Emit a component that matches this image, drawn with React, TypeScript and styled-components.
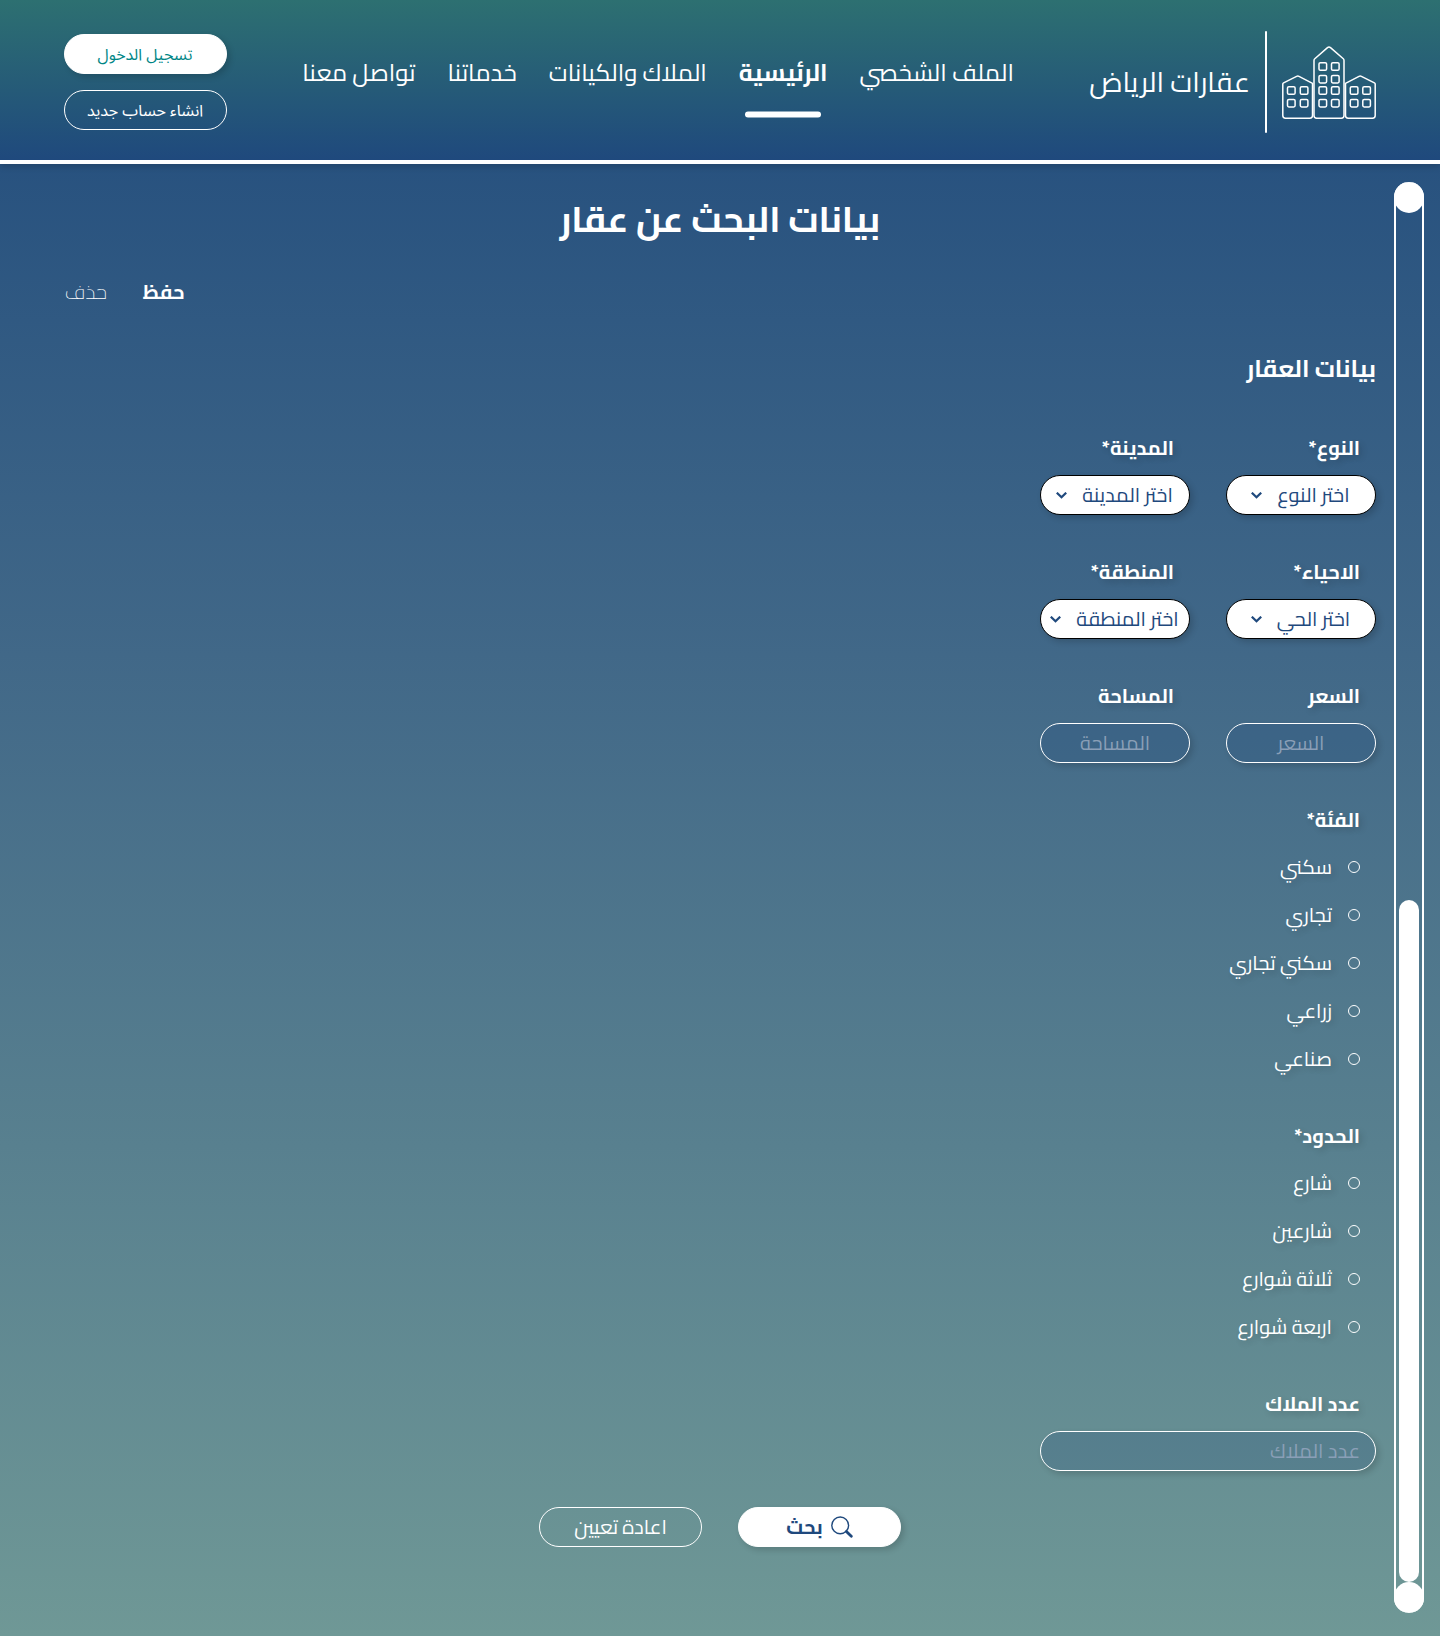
import React from 'react';
import styled, { createGlobalStyle } from 'styled-components';

const NAVY = '#1f497d';
const SOFT_SHADOW = '3px 3px 6px rgba(0, 0, 0, 0.16)';

const GlobalStyle = createGlobalStyle`
  * { box-sizing: border-box; }
  body {
    margin: 0;
    font-family: Cairo, 'DejaVu Sans', sans-serif;
    color: #fff;
  }
  button { font-family: inherit; cursor: pointer; }
`;

const Page = styled.div`
  width: 1440px;
  min-height: 1636px;
  background: linear-gradient(180deg, #1f497d 0%, #28527f 10%, #416888 40%, #6f9896 100%);
`;

/* ---------- header ---------- */

const Header = styled.header`
  display: flex;
  justify-content: space-between;
  align-items: flex-start;
  height: 164px;
  padding: 0 64px;
  border-bottom: 4px solid #fff;
  background: linear-gradient(180deg, #2d7071 0, #1f497d 160px);
  box-shadow: 0 3px 6px rgba(0, 0, 0, 0.16);
`;

const Brand = styled.div`
  display: flex;
  align-items: center;
  padding-top: 31px;
`;

const Divider = styled.span`
  width: 2px;
  height: 102px;
  margin: 0 15px;
  border-radius: 1px;
  background: #fff;
`;

const BrandName = styled.span`
  font-size: 28px;
  line-height: 40px;
`;

const Nav = styled.nav`
  display: flex;
  gap: 32px;
  padding-top: 52px;
  transform: translateY(0.5px);
`;

const NavItem = styled.a<{ $active?: boolean }>`
  display: flex;
  flex-direction: column;
  align-items: center;
  font-size: 24px;
  line-height: 40px;
  font-weight: ${(p) => (p.$active ? 700 : 400)};
`;

const Underline = styled.span`
  width: 76px;
  height: 6px;
  margin-top: 19px;
  border-radius: 3px;
  background: #fff;
`;

const Auth = styled.div`
  display: flex;
  flex-direction: column;
  gap: 16px;
  padding-top: 34px;
`;

const Pill = styled.button<{ $solid?: boolean; $bold?: boolean; $tone?: string }>`
  display: flex;
  align-items: center;
  justify-content: center;
  gap: 8px;
  width: 163px;
  height: 40px;
  padding: 0;
  border: 1px solid #fff;
  border-radius: 20px;
  font-size: 20px;
  line-height: 36px;
  font-weight: ${(p) => (p.$bold ? 700 : 400)};
  color: ${(p) => p.$tone ?? '#fff'};
  background: ${(p) => (p.$solid ? '#fff' : 'transparent')};
  box-shadow: ${(p) => (p.$solid ? SOFT_SHADOW : 'none')};
`;

const AuthPill = styled(Pill)`
  padding: 1px 1px 0 0;
  font-family: 'Noto Sans Arabic', 'Noto Sans', 'Open Sans', sans-serif;
  font-size: 16px;
`;

/* ---------- body ---------- */

const Body = styled.div`
  display: flex;
  gap: 18px;
  padding: 0 16px 23px 64px;
`;

const Rail = styled.div`
  display: flex;
  flex-direction: column;
  align-items: center;
  width: 30px;
  height: 1431px;
  margin-top: 18px;
  border: solid #fff;
  border-width: 0 2px;
  border-radius: 15px;
`;

const Knob = styled.span`
  flex: none;
  width: 30px;
  height: 31px;
  border-radius: 15px;
  background: #fff;
`;

const Thumb = styled.span`
  width: 20px;
  height: 682px;
  margin-top: auto;
  border-radius: 10px;
  background: #fff;
`;

const Main = styled.main`
  flex: 1;
  padding-top: 25px;
`;

const Title = styled.h1`
  margin: 0;
  font-size: 36px;
  line-height: 60px;
  font-weight: 700;
  text-align: center;
`;

const Actions = styled.div`
  display: flex;
  justify-content: flex-end;
  gap: 36px;
  padding: 28px 0 0 1px;
  font-size: 20px;
  line-height: 30px;
`;

const Action = styled.a<{ $bold?: boolean }>`
  font-weight: ${(p) => (p.$bold ? 700 : 200)};
`;

const SectionTitle = styled.h2`
  margin: 43px 0 45px;
  font-size: 24px;
  line-height: 38px;
  font-weight: 700;
`;

const Grid = styled.div`
  display: grid;
  grid-template-columns: 150px 150px;
  gap: 42px 36px;
`;

const Field = styled.div<{ $top?: number }>`
  display: flex;
  flex-direction: column;
  gap: 12px;
  margin-top: ${(p) => p.$top ?? 0}px;
`;

const Label = styled.div`
  height: 30px;
  padding-right: 16px;
  font-size: 20px;
  line-height: 29px;
  font-weight: 700;
  text-shadow: ${SOFT_SHADOW};
  transform: translateY(-0.4px);
`;

const Select = styled.button`
  display: flex;
  align-items: center;
  justify-content: center;
  gap: 15px;
  height: 40px;
  padding: 0 1px 0 0;
  border: 1px solid #000;
  border-radius: 20px;
  font-size: 20px;
  line-height: 36px;
  color: ${NAVY};
  background: #fff;
  box-shadow: ${SOFT_SHADOW};
`;

const Input = styled.div<{ $wide?: boolean }>`
  display: flex;
  align-items: center;
  justify-content: ${(p) => (p.$wide ? 'flex-start' : 'center')};
  width: ${(p) => (p.$wide ? 336 : 150)}px;
  height: 40px;
  padding: 0 15px;
  border: 1px solid #fff;
  border-radius: 20px;
  font-size: 20px;
  line-height: 36px;
  color: #8a9fb7;
  background: rgba(31, 73, 125, 0.22);
  box-shadow: ${SOFT_SHADOW};
`;

const Group = styled.div<{ $top: number }>`
  display: flex;
  flex-direction: column;
  margin-top: ${(p) => p.$top}px;
`;

const Options = styled.div`
  padding-top: 8px;
`;

const Option = styled.label`
  display: flex;
  align-items: center;
  gap: 16px;
  height: 48px;
  padding-right: 16px;
  font-size: 20px;
  line-height: 30px;
  text-shadow: ${SOFT_SHADOW};
`;

const OptionText = styled.span`
  transform: translateY(0.4px);
`;

const Circle = styled.span`
  width: 12px;
  height: 12px;
  border: 1px solid #fff;
  border-radius: 50%;
`;

const Footer = styled.div`
  display: flex;
  justify-content: center;
  gap: 36px;
  margin-top: 36px;
`;

/* ---------- drawings ---------- */

const windows: [number, number][] = [
  ...[5.5, 18.3, 68.3, 80.8].flatMap((x) => [41, 53.7].map((y) => [x, y] as [number, number])),
  ...[37, 49.5].flatMap((x) => [17, 29.7, 41, 53.7].map((y) => [x, y] as [number, number])),
];

const Buildings = () => (
  <svg width="94" height="74" viewBox="0 0 94 74" fill="none" stroke="#fff" strokeWidth="1.5" strokeLinejoin="round">
    <path d="M.8 39 Q.8 38.3 1.6 37.9 L14.6 31.3 Q15.8 30.7 17 31.3 L30.5 38.4 V70.5 Q30.5 73.2 27.8 73.2 H3.5 Q.8 73.2 .8 70.5Z" />
    <path d="M32 15.4 Q32 14.4 32.8 13.7 L45.5 2.6 Q47 1.3 48.5 2.6 L61.3 13.7 Q62 14.4 62 15.4 V70.5 Q62 73.2 59.3 73.2 H34.7 Q32 73.2 32 70.5Z" />
    <path d="M63.5 38.4 L77 31.3 Q78.2 30.7 79.4 31.3 L92.4 37.9 Q93.2 38.3 93.2 39 V70.5 Q93.2 73.2 90.5 73.2 H66.2 Q63.5 73.2 63.5 70.5Z" />
    {windows.map(([x, y]) => (
      <rect key={`${x}-${y}`} x={x} y={y + 0.7} width="7.6" height="7.6" rx="1.4" />
    ))}
  </svg>
);

const Chevron = () => (
  <svg width="11" height="7" viewBox="0 0 11 7" fill="none" stroke={NAVY} strokeWidth="2.2">
    <path d="M.8 .7 L5.5 5.3 L10.2 .7" />
  </svg>
);

const SearchIcon = () => (
  <svg width="22" height="22" viewBox="0 0 22 22" fill="none" stroke={NAVY} strokeLinecap="round">
    <circle cx="9.2" cy="9.4" r="8.4" strokeWidth="1.4" />
    <path d="M15.4 15.4 L20.3 20.2" strokeWidth="2.8" />
  </svg>
);

/* ---------- data ---------- */

const nav = [
  { text: 'الملف الشخصي' },
  { text: 'الرئيسية', active: true },
  { text: 'الملاك والكيانات' },
  { text: 'خدماتنا' },
  { text: 'تواصل معنا' },
];

const selects = [
  { label: 'النوع*', text: 'اختر النوع' },
  { label: 'المدينة*', text: 'اختر المدينة' },
  { label: 'الاحياء*', text: 'اختر الحي' },
  { label: 'المنطقة*', text: 'اختر المنطقة' },
];

const inputs = ['السعر', 'المساحة'];

const groups = [
  { label: 'الفئة*', top: 42, options: ['سكني', 'تجاري', 'سكني تجاري', 'زراعي', 'صناعي'] },
  { label: 'الحدود*', top: 38, options: ['شارع', 'شارعين', 'ثلاثة شوارع', 'اربعة شوارع'] },
];

export default function App() {
  return (
    <Page dir="rtl" lang="ar">
      <GlobalStyle />
      <Header>
        <Brand>
          <Buildings />
          <Divider />
          <BrandName>عقارات الرياض</BrandName>
        </Brand>
        <Nav>
          {nav.map((n) => (
            <NavItem key={n.text} $active={n.active}>
              {n.text}
              {n.active && <Underline />}
            </NavItem>
          ))}
        </Nav>
        <Auth>
          <AuthPill $solid $tone="#008686">تسجيل الدخول</AuthPill>
          <AuthPill>انشاء حساب جديد</AuthPill>
        </Auth>
      </Header>
      <Body>
        <Rail>
          <Knob />
          <Thumb />
          <Knob />
        </Rail>
        <Main>
          <Title>بيانات البحث عن عقار</Title>
          <Actions>
            <Action $bold>حفظ</Action>
            <Action>حذف</Action>
          </Actions>
          <SectionTitle>بيانات العقار</SectionTitle>
          <Grid>
            {selects.map((s) => (
              <Field key={s.label}>
                <Label>{s.label}</Label>
                <Select>
                  {s.text}
                  <Chevron />
                </Select>
              </Field>
            ))}
            {inputs.map((text) => (
              <Field key={text}>
                <Label>{text}</Label>
                <Input>{text}</Input>
              </Field>
            ))}
          </Grid>
          {groups.map((g) => (
            <Group key={g.label} $top={g.top}>
              <Label>{g.label}</Label>
              <Options>
                {g.options.map((text) => (
                  <Option key={text}>
                    <Circle />
                    <OptionText>{text}</OptionText>
                  </Option>
                ))}
              </Options>
            </Group>
          ))}
          <Field $top={38}>
            <Label>عدد الملاك</Label>
            <Input $wide>عدد الملاك</Input>
          </Field>
          <Footer>
            <Pill $solid $bold $tone={NAVY}>
              <SearchIcon />
              بحث
            </Pill>
            <Pill>اعادة تعيين</Pill>
          </Footer>
        </Main>
      </Body>
    </Page>
  );
}
